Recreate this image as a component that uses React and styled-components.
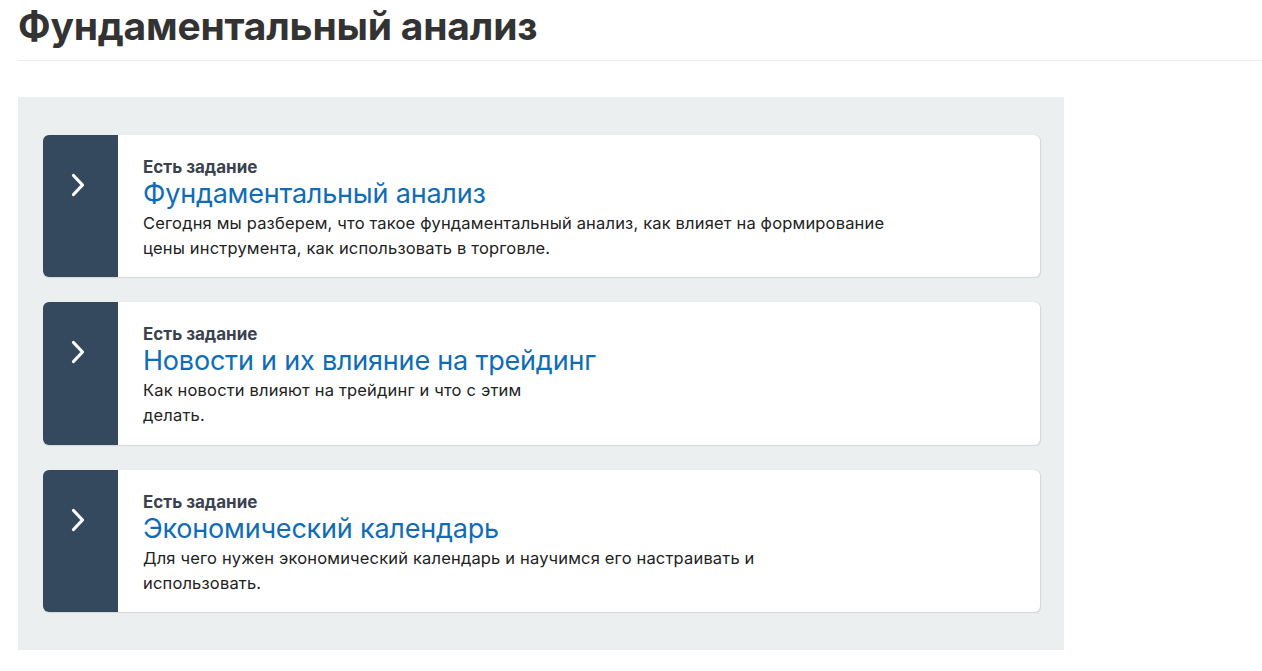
import React from "react";
import styled, { createGlobalStyle } from "styled-components";

const Global = createGlobalStyle`
  html, body { margin: 0; padding: 0; background: #fff; }
  body { font-family: Inter, "Noto Sans", sans-serif; color: #222; }
  * { box-sizing: border-box; }
`;

const Page = styled.div`
  padding: 0 0 0 18px;
`;

const Header = styled.header`
  border-bottom: 1px solid #ececec;
  padding-top: 3px;
  height: 61px;
`;

const PageTitle = styled.h1`
  margin: 0;
  font-size: 39px;
  line-height: 46px;
  font-weight: 700;
  color: #333;
  letter-spacing: -0.2px;
`;

const Panel = styled.section`
  margin-top: 36px;
  width: 1046px;
  background: #ebeff0;
  padding: 38px 24px 38px 25px;
  display: flex;
  flex-direction: column;
  gap: 25px;
`;

const Card = styled.article`
  display: flex;
  height: ${(p) => p.$h}px;
  background: #fff;
  border-radius: 6px;
  overflow: hidden;
  box-shadow: 0.5px 0.5px 1px rgba(0, 0, 0, 0.1);
`;

const Side = styled.div`
  width: 75px;
  flex: none;
  background: #34495e;
  display: flex;
  justify-content: center;
  padding-top: 38px;
  padding-right: 6px;
`;

const Body = styled.div`
  padding: 22px 25px 0 25px;
`;

const Label = styled.div`
  font-size: 17px;
  font-weight: 700;
  color: #3a4250;
  line-height: 20px;
`;

const Title = styled.a`
  display: block;
  font-size: 27px;
  line-height: 34px;
  color: #0f6cb6;
  text-decoration: none;
  letter-spacing: -0.2px;
`;

const Desc = styled.p`
  margin: 0;
  font-size: 16.5px;
  line-height: 25px;
  letter-spacing: 0.17px;
  color: #222;
`;

const Chevron = () => (
  <svg width="16" height="24" viewBox="0 0 16 24" fill="none">
    <path
      d="M3.5 2.5 L12.5 12 L3.5 21.5"
      stroke="#fff"
      strokeWidth="3.2"
      strokeLinecap="round"
      strokeLinejoin="round"
    />
  </svg>
);

const items = [
  {
    title: "Фундаментальный анализ",
    lines: [
      "Сегодня мы разберем, что такое фундаментальный анализ, как влияет на формирование",
      "цены инструмента, как использовать в торговле.",
    ],
    h: 142,
  },
  {
    title: "Новости и их влияние на трейдинг",
    lines: ["Как новости влияют на трейдинг и что с этим", "делать."],
    h: 143,
  },
  {
    title: "Экономический календарь",
    lines: [
      "Для чего нужен экономический календарь и научимся его настраивать и",
      "использовать.",
    ],
    h: 142,
  },
];

export default function App() {
  return (
    <>
      <Global />
      <Page>
        <Header>
          <PageTitle>Фундаментальный анализ</PageTitle>
        </Header>
        <Panel>
          {items.map((it) => (
            <Card key={it.title} $h={it.h}>
              <Side>
                <Chevron />
              </Side>
              <Body>
                <Label>Есть задание</Label>
                <Title href="#">{it.title}</Title>
                <Desc>
                  {it.lines.map((l, i) => (
                    <React.Fragment key={i}>
                      {l}
                      {i < it.lines.length - 1 && <br />}
                    </React.Fragment>
                  ))}
                </Desc>
              </Body>
            </Card>
          ))}
        </Panel>
      </Page>
    </>
  );
}
